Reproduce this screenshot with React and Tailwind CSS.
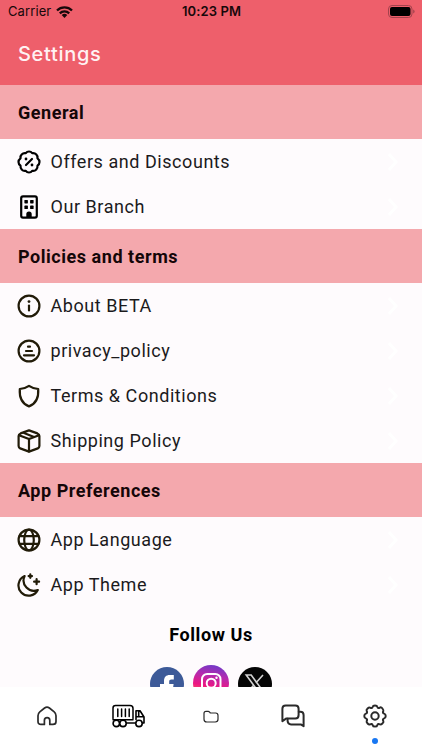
const stroke = {
  fill: 'none',
  stroke: 'currentColor',
  strokeWidth: 2.2,
  strokeLinecap: 'round',
  strokeLinejoin: 'round',
};

function Icon({ children, className = 'w-6 h-6' }) {
  return (
    <svg className={`${className} flex-shrink-0`} viewBox="0 0 24 24" {...stroke}>
      {children}
    </svg>
  );
}

const DiscountIcon = () => (
  <Icon>
    <path d="M12 1.5Q14 1.5 15.2 3.2Q17.8 2.8 19.2 4.4Q20.8 5.9 20.5 8.3Q22.5 9.8 22.5 12Q22.5 14.2 20.5 15.7Q20.8 18.1 19.2 19.6Q17.8 21.2 15.2 20.8Q14 22.5 12 22.5Q10 22.5 8.8 20.8Q6.2 21.2 4.8 19.6Q3.2 18.1 3.5 15.7Q1.5 14.2 1.5 12Q1.5 9.8 3.5 8.3Q3.2 5.9 4.8 4.4Q6.2 2.8 8.8 3.2Q10 1.5 12 1.5Z" />
    <path d="M9 15l6-6" />
    <circle cx="9" cy="9" r="1.4" fill="currentColor" stroke="none" />
    <circle cx="15" cy="15" r="1.4" fill="currentColor" stroke="none" />
  </Icon>
);

const BuildingIcon = () => (
  <Icon>
    <rect x="4.2" y="1.4" width="15.6" height="21.2" rx="1.8" />
    <g fill="currentColor" stroke="none">
      <rect x="7.4" y="5" width="3.5" height="3.4" rx=".6" />
      <rect x="13.1" y="5" width="3.5" height="3.4" rx=".6" />
      <rect x="7.4" y="10.6" width="3.5" height="3.4" rx=".6" />
      <rect x="13.1" y="10.6" width="3.5" height="3.4" rx=".6" />
      <path d="M9.3 22.5v-3.4a2.7 2.7 0 0 1 5.4 0v3.4z" />
    </g>
  </Icon>
);

const InfoIcon = () => (
  <Icon>
    <circle cx="12" cy="12" r="10.4" />
    <path d="M12 11.5v5" />
    <circle cx="12" cy="7.6" r="1.4" fill="currentColor" stroke="none" />
  </Icon>
);

const PrivacyIcon = () => (
  <Icon>
    <circle cx="12" cy="12" r="10.4" />
    <path d="M11 7.7h2M9 12h6M7 16.3h10" />
  </Icon>
);

const ShieldIcon = () => (
  <Icon>
    <path d="M12 1.8C9.5 3.5 6 4.6 2.8 5C2.2 13.5 4.2 19.4 12 22.4C19.8 19.4 21.8 13.5 21.2 5C18 4.6 14.5 3.5 12 1.8Z" />
  </Icon>
);

const BoxIcon = () => (
  <Icon>
    <path d="M12 1.4L20.4 4.4Q22.4 5.2 22.4 7V17Q22.4 18.7 20.8 19.4L12 22.6L3.2 19.4Q1.6 18.7 1.6 17V7Q1.6 5.2 3.6 4.4Z" />
    <path d="M2 6.2L12 10L22 6.2M12 10v12.4M7 4l10 4" />
  </Icon>
);

const GlobeIcon = () => (
  <Icon>
    <circle cx="12" cy="12" r="10.4" />
    <ellipse cx="12" cy="12" rx="4.8" ry="10.4" />
    <path d="M2.6 8.2h18.8M2.6 15.8h18.8" />
  </Icon>
);

const MoonIcon = () => (
  <Icon>
    <path d="M7.6 3.1A10.2 10.2 0 1 0 20.8 17A10.3 10.3 0 0 1 7.6 3.1Z" />
    <path d="M13.3 1.4v3.4M11.6 3.1h3.4M19.6 6.2v5M17.1 8.7h5" />
  </Icon>
);

const sections = [
  {
    title: 'General',
    tint: 'text-black',
    items: [
      { label: 'Offers and Discounts', icon: DiscountIcon },
      { label: 'Our Branch', icon: BuildingIcon },
    ],
  },
  {
    title: 'Policies and terms',
    tint: 'text-[#211b08]',
    items: [
      { label: 'About BETA', icon: InfoIcon },
      { label: 'privacy_policy', icon: PrivacyIcon },
      { label: 'Terms & Conditions', icon: ShieldIcon },
      { label: 'Shipping Policy', icon: BoxIcon },
    ],
  },
  {
    title: 'App Preferences',
    tint: 'text-[#211b08]',
    items: [
      { label: 'App Language', icon: GlobeIcon },
      { label: 'App Theme', icon: MoonIcon },
    ],
  },
];

function StatusBar() {
  return (
    <div className="grid grid-cols-3 items-center h-6 pl-2 pr-[7px] font-[Inter,sans-serif] text-[#17080a]">
      <div className="flex items-center gap-[5px]">
        <span className="text-[13px] tracking-[0.1px]">Carrier</span>
        <svg className="w-[17px] h-3" viewBox="0 0 17 12" fill="none" stroke="currentColor" strokeWidth="2.3">
          <path d="M1 4.5a10.6 10.6 0 0 1 15 0M3.8 7.4a6.7 6.7 0 0 1 9.4 0" />
          <path d="M8.5 12L5.7 9.1a4 4 0 0 1 5.6 0z" fill="currentColor" stroke="none" />
        </svg>
      </div>
      <span className="text-[13px] font-semibold text-center whitespace-nowrap tracking-[0.1px]">10:23 PM</span>
      <svg className="w-[27px] h-[13px] -mt-0.5 justify-self-end" viewBox="0 0 27 13">
        <rect x=".5" y=".5" width="23.5" height="12" rx="3.5" fill="none" stroke="#a3434d" />
        <rect x="2" y="2" width="20.5" height="9" rx="2" fill="#000" />
        <path d="M25.2 4.5v4q1.4-.6 1.4-2t-1.4-2z" fill="#a3434d" />
      </svg>
    </div>
  );
}

function Row({ icon: RowIcon, label, tint }) {
  return (
    <div className="flex items-center h-[45px] pl-[17px] pr-[23px]">
      <span className={tint}><RowIcon /></span>
      <span className="ml-[9.5px] -mt-px text-[18px] tracking-[0.55px] text-[#1b1a1c]">{label}</span>
      <svg className="ml-auto w-3 h-5" viewBox="0 0 12 20" fill="none" stroke="#ffffff" strokeWidth="3">
        <path d="M2 2l7 8-7 8" />
      </svg>
    </div>
  );
}

function SocialLinks() {
  return (
    <div className="flex justify-center items-start gap-2 mt-4">
      <svg className="w-[34px] h-[34px] mt-0.5 -ml-px mr-px" viewBox="0 0 34 34">
        <circle cx="17" cy="17" r="17" fill="#3d5a98" />
        <path d="M14 34V22h-4v-5h4v-3c0-4 2.2-6 5.6-6h4.2v4.5h-2.3c-1.7 0-2.3.8-2.3 2.2V17h4.4l-.7 5h-3.7v12z" fill="#fff" />
      </svg>
      <svg className="w-9 h-9" viewBox="0 0 36 36">
        <defs>
          <linearGradient id="insta" x1=".6" y1="0" x2=".4" y2="1">
            <stop offset="0" stopColor="#7139c8" />
            <stop offset=".3" stopColor="#b52bae" />
            <stop offset=".6" stopColor="#ed1682" />
            <stop offset="1" stopColor="#fda33c" />
          </linearGradient>
        </defs>
        <circle cx="18" cy="18" r="18" fill="url(#insta)" />
        <g fill="none" stroke="#fff" strokeWidth="2">
          <rect x="9" y="9" width="18.5" height="18.5" rx="5.2" />
          <circle cx="18.2" cy="18.2" r="4.5" />
        </g>
        <circle cx="23.5" cy="12.8" r="1.2" fill="#fff" />
      </svg>
      <svg className="w-[34px] h-[34px] ml-px mt-0.5" viewBox="0 0 34 34">
        <circle cx="17" cy="17" r="17" fill="#050505" />
        <path d="M8.2 8h5L26 25.5h-5zM25 8l-7.2 8M15.2 18.8l-6.4 7" fill="none" stroke="#d2d2d2" strokeWidth="1.6" />
      </svg>
    </div>
  );
}

function BottomNav() {
  return (
    <nav className="h-[63px] flex-shrink-0 grid grid-cols-[92px_73px_91px_73px_91px] pb-[5px] bg-white text-[#2a2a2a]">
      <button className="flex items-center justify-center">
        <svg className="w-5 h-5 ml-0.5 -mt-px" viewBox="0 0 20 20" {...stroke} strokeWidth={1.7}>
          <path d="M7.4 18.4H4Q1 18.4 1 15.4V9.7Q1 7.3 2.8 5.8L7.6 2Q10 .3 12.4 2L17.2 5.8Q19 7.3 19 9.7V15.4Q19 18.4 16 18.4H12.8V14.4Q12.8 11.6 10.1 11.6T7.4 14.4Z" />
        </svg>
      </button>
      <button className="flex items-center justify-center text-black">
        <svg className="w-[33px] h-6 -mt-px" viewBox="0 0 33 24" {...stroke} strokeWidth={1.6}>
          <path d="M1 14.5V4Q1 1.5 3.5 1.5H18Q21 1.5 21 4.5V14.5M5.8 5v7.5M9.6 5v7.5M13.4 5v7.5M17.2 5v7.5" strokeWidth="1.5" />
          <path d="M1 15.8H21M14.5 19H23.3M24 15.5V6.7H28L32 13V19H30.5M24 12.7H31.6M26.7 7v5.5" />
          <circle cx="4.3" cy="19.4" r="3.2" fill="#fff" />
          <circle cx="11" cy="19.4" r="3.2" fill="#fff" />
          <circle cx="27" cy="19.4" r="3.2" fill="#fff" />
        </svg>
      </button>
      <button className="flex items-center justify-center">
        <svg className="w-4 h-3.5 mt-px" viewBox="0 0 16 14" {...stroke} strokeWidth={1.2}>
          <path d="M1 3.4Q1 1.4 3 1.4H5.2Q6 1.4 6.6 2.1L7.4 3H12.6Q15 3 15 5.4V9.3Q15 12 12.2 12H3.8Q1 12 1 9.3Z" />
        </svg>
      </button>
      <button className="flex items-center justify-center">
        <svg className="w-6 h-6 -mt-px" viewBox="0 0 24 24" {...stroke} strokeWidth={2}>
          <path d="M1.4 17.2V4.8Q1.4 1.5 4.7 1.5H14.3Q17.6 1.5 17.6 4.8V11.1Q17.6 14.6 14.3 14.6H5Z" />
          <path d="M17.8 7.7H19.4Q22.6 7.7 22.6 11V22.2L19.8 20.4H10Q7 20.4 6.6 17.2V14.8" />
        </svg>
      </button>
      <button className="relative flex items-center justify-center">
        <Icon className="w-6 h-6 -mt-px">
          <path strokeWidth="2" d="M9.7 2.8Q10 1.4 12 1.4T14.3 2.8Q14.9 4.8 16.9 3.7Q18 2.7 19.4 4.5T20.3 7.1Q19.2 8.9 21.2 9.6Q22.7 10 22.7 12T21.2 14.4Q19.2 15.1 20.3 16.9Q21 18 19.4 19.5T16.9 20.3Q14.9 19.2 14.3 21.2Q14 22.6 12 22.6T9.7 21.2Q9.1 19.2 7.1 20.3Q6 21 4.6 19.5T3.7 16.9Q4.8 15.1 2.8 14.4Q1.3 14 1.3 12T2.8 9.6Q4.8 8.9 3.7 7.1Q3 6 4.6 4.5T7.1 3.7Q9.1 4.8 9.7 2.8Z" />
          <circle cx="12" cy="12" r="3.7" strokeWidth="2" />
        </Icon>
        <span className="absolute bottom-px left-[43px] w-1.5 h-1.5 rounded-full bg-[#1877f2]" />
      </button>
    </nav>
  );
}

export default function App() {
  return (
    <div className="flex flex-col h-screen overflow-hidden bg-[#fefbfd] font-[Roboto,sans-serif]">
      <header className="h-[85px] flex-shrink-0 bg-[#ee5f6b]">
        <StatusBar />
        <h1 className="pl-[18px] pt-[15px] text-[20px] leading-[30px] font-medium tracking-[0.7px] text-[#fff2f3] font-[Inter,sans-serif]">Settings</h1>
      </header>

      <main className="flex-1 min-h-0 overflow-hidden">
        {sections.map(({ title, tint, items }) => (
          <section key={title}>
            <h2 className="flex items-center h-[54px] pl-[18px] bg-[#f4a8ad] text-[18px] font-bold tracking-[0.54px] text-[#140608]">
              {title}
            </h2>
            {items.map((item) => <Row key={item.label} tint={tint} {...item} />)}
          </section>
        ))}
        <h2 className="mt-[14px] text-center text-[18px] leading-7 font-bold tracking-[0.6px] text-black">Follow Us</h2>
        <SocialLinks />
      </main>

      <BottomNav />
    </div>
  );
}
